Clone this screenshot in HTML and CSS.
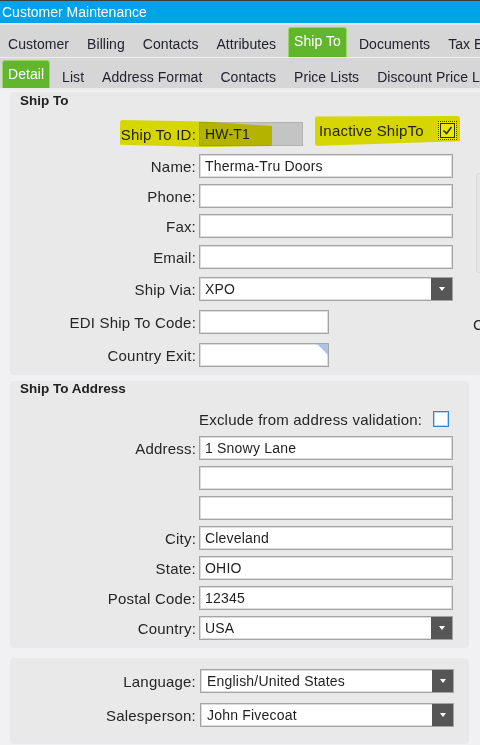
FILE: index.html
```html
<!DOCTYPE html>
<html lang="en">
<head>
    <meta charset="UTF-8">
    <title>Customer Maintenance</title>
    <link rel="stylesheet" href="styles.css">
</head>
<body>
    <div class="titlebar">Customer Maintenance</div>

    <div class="tabs tabs-main">
        <span class="tab">Customer</span>
        <span class="tab">Billing</span>
        <span class="tab">Contacts</span>
        <span class="tab">Attributes</span>
        <span class="tab active">Ship To</span>
        <span class="tab">Documents</span>
        <span class="tab">Tax Exemptions</span>
    </div>
    <div class="tabs tabs-sub">
        <span class="tab active">Detail</span>
        <span class="tab">List</span>
        <span class="tab">Address Format</span>
        <span class="tab">Contacts</span>
        <span class="tab">Price Lists</span>
        <span class="tab">Discount Price Lists</span>
    </div>

    <div class="content">
        <!-- ship to -->
        <section class="panel panel-shipto">
            <div class="form-col">
                <h2>Ship To</h2>
                <div class="row row-id">
                    <label>Ship To ID:</label>
                    <div class="id-cell">
                        <div class="field field-id">HW-T1</div>
                        <div class="inactive">
                            <span>Inactive ShipTo</span>
                            <span class="check">
                                <svg width="15" height="15" viewBox="0 0 15 15">
                                    <rect x="0.5" y="0.5" width="14" height="14" fill="none" stroke="#33331a" stroke-width="1"/>
                                    <polyline points="3.5,7.5 6.5,10.5 11.5,4" fill="none" stroke="#33331a" stroke-width="1.6"/>
                                </svg>
                            </span>
                        </div>
                    </div>
                    <span class="hl hl-id"></span>
                    <span class="hl hl-inactive"></span>
                </div>
                <div class="row gap-8">
                    <label>Name:</label>
                    <div class="field">Therma-Tru Doors</div>
                </div>
                <div class="row gap-6">
                    <label>Phone:</label>
                    <div class="field"></div>
                </div>
                <div class="row gap-6">
                    <label>Fax:</label>
                    <div class="field"></div>
                </div>
                <div class="row gap-7">
                    <label>Email:</label>
                    <div class="field"></div>
                </div>
                <div class="row gap-8">
                    <label>Ship Via:</label>
                    <div class="field select"><span class="value">XPO</span><span class="btn"></span></div>
                </div>
                <div class="row gap-9">
                    <label>EDI Ship To Code:</label>
                    <div class="field field-short"></div>
                </div>
                <div class="row gap-9">
                    <label>Country Exit:</label>
                    <div class="field field-short field-corner"></div>
                </div>
            </div>
            <div class="side-col">
                <div class="side-box"></div>
                <div class="side-label">Comments</div>
            </div>
        </section>

        <!-- ship to address -->
        <section class="panel panel-address">
            <h2>Ship To Address</h2>
            <div class="row row-exclude">
                <span></span>
                <div class="exclude">
                    <span>Exclude from address validation:</span>
                    <span class="box"></span>
                </div>
            </div>
            <div class="row gap-6">
                <label>Address:</label>
                <div class="field">1 Snowy Lane</div>
            </div>
            <div class="row gap-6">
                <span></span>
                <div class="field"></div>
            </div>
            <div class="row gap-6">
                <span></span>
                <div class="field"></div>
            </div>
            <div class="row gap-6">
                <label>City:</label>
                <div class="field">Cleveland</div>
            </div>
            <div class="row gap-6">
                <label>State:</label>
                <div class="field">OHIO</div>
            </div>
            <div class="row gap-6">
                <label>Postal Code:</label>
                <div class="field">12345</div>
            </div>
            <div class="row gap-6">
                <label>Country:</label>
                <div class="field select"><span class="value">USA</span><span class="btn"></span></div>
            </div>
        </section>

        <!-- other -->
        <section class="panel panel-extra">
            <div class="row">
                <label>Language:</label>
                <div class="field select"><span class="value">English/United States</span><span class="btn"></span></div>
            </div>
            <div class="row gap-10">
                <label>Salesperson:</label>
                <div class="field select"><span class="value">John Fivecoat</span><span class="btn"></span></div>
            </div>
        </section>
    </div>
</body>
</html>
```

FILE: styles.css
```css
* {
    box-sizing: border-box;
}

body {
    margin: 0;
    width: 480px;
    height: 745px;
    overflow: hidden;
    background: #f1f1f3;
    font-family: "Liberation Sans", Arial, sans-serif;
    color: #262626;
}

.titlebar {
    height: 25px;
    border-top: 1px solid #3b3b3b;
    border-bottom: 2px solid #e4e4e4;
    background: #00a2e8;
    color: #fff;
    font-size: 14px;
    line-height: 22px;
    padding-left: 2px;
}

/* tabs */
.tabs {
    display: flex;
    align-items: flex-end;
    background: #d6d6d6;
    white-space: nowrap;
    font-size: 14px;
    letter-spacing: 0.05px;
    color: #232330;
    overflow: hidden;
}

.tabs-main {
    height: 33px;
    border-bottom: 1px solid #eeeeee;
}

.tabs-sub {
    height: 32px;
    border-bottom: 2px solid #ebebeb;
}

.tab {
    margin: 0 3px;
    padding: 0 6px;
    height: 26px;
    line-height: 26px;
}

.tab:first-child {
    margin-left: 2px;
}

.tabs-sub .tab {
    height: 22px;
    line-height: 22px;
}

.tab.active {
    background: #62b62e;
    color: #fff;
    border: 1px solid #9ad46c;
    border-bottom: 0;
    border-radius: 3px 3px 0 0;
    padding: 0 5px;
    height: 30px;
    line-height: 27px;
}

.tabs-sub .tab.active {
    height: 28px;
    line-height: 26px;
}

/* panels */
.content {
    padding: 2px 0 0 10px;
}

.panel {
    background: #e9e9e9;
    border-radius: 4px;
}

.panel h2 {
    margin: 0;
    font-size: 13.5px;
    font-weight: bold;
    line-height: 16px;
    padding: 1px 0 0 10px;
    color: #222;
}

.panel-shipto {
    display: flex;
    width: 640px;
    padding-bottom: 8px;
}

.form-col {
    width: 466px;
    flex: none;
}

.side-col {
    padding-top: 81px;
}

.side-box {
    width: 160px;
    height: 100px;
    border: 1px solid #dadada;
    border-radius: 3px;
    background: #e6e6e6;
}

.side-label {
    margin: 44px 0 0 -3px;
    font-size: 15px;
    line-height: 16px;
}

.panel-address {
    width: 459px;
    margin-top: 6px;
    padding-bottom: 8px;
}

.panel-address h2 {
    padding-top: 0;
}

.panel-extra {
    width: 459px;
    margin-top: 10px;
    padding: 11px 0 17px;
}

/* rows */
.row {
    display: grid;
    grid-template-columns: 186px 254px;
    column-gap: 3px;
    align-items: center;
    height: 24px;
}

.panel-extra .row {
    column-gap: 4px;
}

.row > label {
    text-align: right;
    font-size: 15px;
    letter-spacing: 0.2px;
    white-space: nowrap;
}

.gap-6 { margin-top: 6px; }
.gap-7 { margin-top: 7px; }
.gap-8 { margin-top: 8px; }
.gap-9 { margin-top: 9px; }
.gap-10 { margin-top: 10px; }

.row-id {
    position: relative;
    margin-top: 13px;
}

.row-exclude {
    height: 22px;
    margin-top: 11px;
}

/* fields */
.field {
    height: 24px;
    border: 1px solid #a4a4a4;
    box-shadow: inset 0 0 0 1px #dcdcdc;
    background: #fff;
    font-size: 14px;
    letter-spacing: 0.2px;
    line-height: 22px;
    padding: 0 5px;
    color: #1f1f1f;
    white-space: nowrap;
    overflow: hidden;
}

.panel-extra .field {
    padding-left: 6px;
}

.field-short {
    width: 130px;
}

.field-corner {
    position: relative;
}

.field-corner::after {
    content: "";
    position: absolute;
    top: 0;
    right: 0;
    border-top: 11px solid #a9c3e5;
    border-left: 11px solid transparent;
}

.select {
    display: flex;
    padding-right: 0;
}

.select .value {
    flex: 1;
}

.select .btn {
    width: 21px;
    height: 22px;
    background: #565656;
    display: flex;
    align-items: center;
    justify-content: center;
}

.select .btn::before {
    content: "";
    border-left: 3px solid transparent;
    border-right: 3px solid transparent;
    border-top: 4px solid #fff;
}

/* ship to id */
.id-cell {
    display: flex;
    align-items: flex-start;
    height: 24px;
}

.field-id {
    width: 104px;
    flex: none;
    background: #c4c4c4;
    border-color: #b2b2b2;
    box-shadow: none;
}

.inactive {
    display: flex;
    align-items: center;
    margin: -1px 0 0 16px;
    font-size: 15px;
    letter-spacing: 0.2px;
    line-height: 19px;
    white-space: nowrap;
}

.check {
    display: block;
    width: 19px;
    height: 19px;
    margin-left: 14px;
    padding: 1px;
    border: 1px dotted #444;
    background: #fff;
}

.check svg {
    display: block;
}

.exclude {
    display: flex;
    align-items: center;
    font-size: 15px;
    letter-spacing: 0.2px;
    white-space: nowrap;
}

.exclude .box {
    width: 16px;
    height: 16px;
    margin-left: 11px;
    background: #fff;
    border: 1px solid #2f86dd;
    box-shadow: inset 0 0 0 1px #b5d4f3;
}

/* marker highlights */
.hl {
    position: absolute;
    background: #ebeb00;
    mix-blend-mode: multiply;
    border-radius: 3px;
}

.hl-id {
    left: 110px;
    top: -2px;
    width: 152px;
    height: 27px;
    clip-path: polygon(0 0, 55% 6%, 100% 22%, 100% 96%, 55% 100%, 0 92%);
}

.hl-inactive {
    left: 305px;
    top: -6px;
    width: 145px;
    height: 30px;
    clip-path: polygon(0 2%, 100% 0, 100% 84%, 50% 92%, 0 100%);
}
```
